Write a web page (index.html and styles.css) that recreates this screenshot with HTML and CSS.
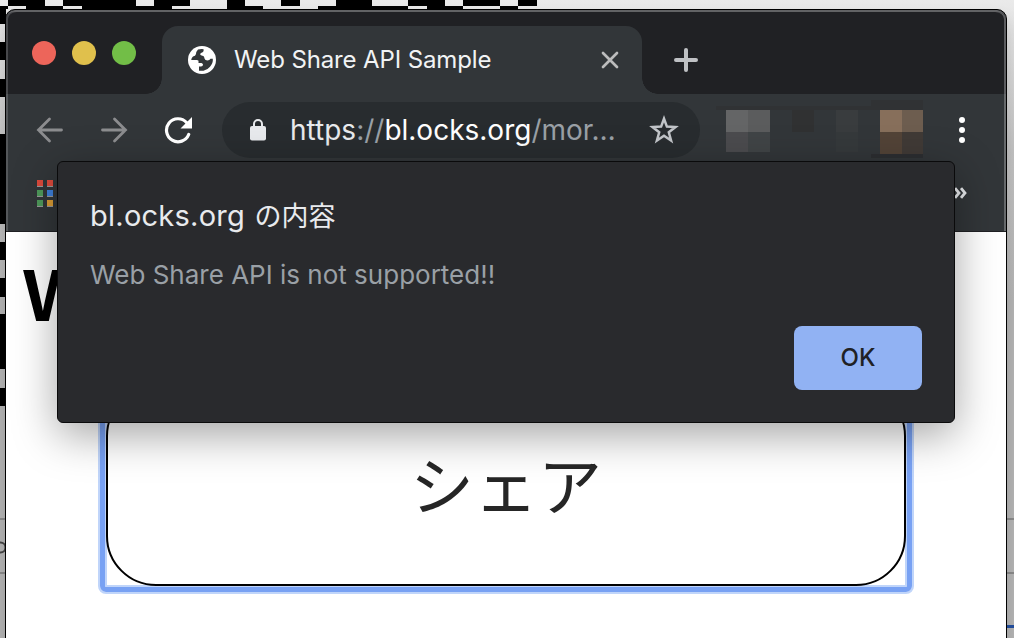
FILE: index.html
```html
<!DOCTYPE html>
<html lang="ja">
<head>
    <meta charset="UTF-8">
    <meta name="viewport" content="width=device-width, initial-scale=1.0">
    <title>Web Share API Sample</title>
    <link rel="stylesheet" href="styles.css">
</head>
<body>
    <!-- Desktop behind the browser -->
    <svg class="backdrop" width="1014" height="638" viewBox="0 0 1014 638">
        <defs>
            <linearGradient id="shade" gradientUnits="userSpaceOnUse" x1="0" y1="0" x2="0" y2="300">
                <stop offset="0" stop-color="#eaeaea"/>
                <stop offset="0.5" stop-color="#c2c2c2"/>
                <stop offset="1" stop-color="#b4b4b4"/>
            </linearGradient>
        </defs>
        <rect width="1014" height="638" fill="url(#shade)"/>
        <path d="M0 0H537V6H518V9H6V406H0Z" fill="#000"/>
        <path d="M0 0h8v6h-8zM45 0h18v6h-18zM136 0h18v6h-18zM190 0h37v6h-37zM245 0h36v6h-36zM300 0h36v6h-36zM372 0h36v6h-36zM445 0h18v6h-18zM500 0h18v6h-18zM8 6h18v3h-18zM63 6h19v3h-19zM172 6h55v3h-55zM263 6h55v3h-55zM408 6h19v3h-19zM463 6h37v3h-37zM0 24h6v18h-6zM0 60h6v19h-6zM0 97h6v37h-6zM0 224h6v18h-6zM0 260h6v18h-6zM0 297h6v17h-6zM0 369h6v19h-6z" fill="url(#shade)"/>
        <path d="M0 518h6v2h-6zM0 572h6v2h-6zM1006 518h8v2h-8zM1006 572h8v2h-8z" fill="#898989"/>
        <circle cx="0.5" cy="547.5" r="5" fill="none" stroke="#444" stroke-width="2"/>
        <rect x="1006" y="625" width="8" height="3" fill="#234f9f"/>
    </svg>

    <div class="window">
        <div class="tabstrip">
            <div class="lights">
                <span class="light red"></span>
                <span class="light yellow"></span>
                <span class="light green"></span>
            </div>
            <div class="tab">
                <svg class="globe" width="28" height="28" viewBox="0 0 28 28">
                    <circle cx="14" cy="14" r="14" fill="#fff"/>
                    <path d="M10 3.600Q13 2.800 15.600 3.200V4.800Q15.500 6.500 13.500 6.800Q12 7.200 12.200 8.500Q12.500 9.500 14.500 9.700Q16.500 10 16.500 12.500Q17 14.500 19.500 14.500Q21.500 14.500 22.500 12.800H24.800Q25.300 17 22 20.800Q19.500 24 15.500 24.800H11V20.500H13Q15 20.300 15 18.500Q15 17.500 13.500 17H10.500V14.800Q10 14 8.500 14H3.200Q3.500 11.500 5 10.500Q7.500 10 8 8Q8.200 5.500 10 3.600Z" fill="#323639"/>
                </svg>
                <span class="tab-title">Web Share API Sample</span>
                <svg class="close" width="18" height="18" viewBox="0 0 18 18">
                    <path d="M2 2L16 16M16 2L2 16" stroke="#bcbcbd" stroke-width="2.7" stroke-linecap="round"/>
                </svg>
            </div>
            <svg class="new-tab" width="24" height="24" viewBox="0 0 24 24">
                <path d="M12 2V22M2 12H22" stroke="#bfc1c4" stroke-width="4" stroke-linecap="round"/>
            </svg>
        </div>

        <div class="toolbar">
            <svg class="arrow" width="28" height="28" viewBox="0 0 28 28">
                <path d="M13.500 3L2.500 14L13.500 25M2.500 14H25.500" fill="none" stroke="#8c8d8f" stroke-width="2.8" stroke-linecap="round"/>
            </svg>
            <svg class="arrow forward" width="28" height="28" viewBox="0 0 28 28">
                <path d="M14.500 3L25.500 14L14.500 25M25.500 14H2.500" fill="none" stroke="#8c8d8f" stroke-width="2.8" stroke-linecap="round"/>
            </svg>
            <svg class="reload" width="28" height="28" viewBox="0 0 28 28">
                <path d="M22.500 6.500A11.500 11.500 0 1 0 24.700 18.500" fill="none" stroke="#fff" stroke-width="3.200" stroke-linecap="round"/>
                <path d="M28 1V12.500H16.500Z" fill="#fff"/>
            </svg>
            <div class="omnibox">
                <svg class="lock" width="16" height="22" viewBox="0 0 16 22">
                    <path d="M4 8V5a4 4 0 0 1 8 0V8" fill="none" stroke="#e8eaed" stroke-width="2"/>
                    <rect y="7" width="16" height="14.500" rx="2" fill="#e8eaed"/>
                </svg>
                <span class="url"><span class="scheme">https</span>://<b>bl.ocks.org</b>/mor…</span>
                <svg class="star" width="30" height="30" viewBox="0 0 30 30">
                    <path d="M15 3.700L17.900 11.600L26.500 12L19.800 17.300L22.100 25.500L15 20.800L7.900 25.500L10.200 17.300L3.500 12L12.100 11.600Z" fill="none" stroke="#c2c5c9" stroke-width="2.500"/>
                </svg>
            </div>
            <svg class="extensions" width="207" height="58" viewBox="0 0 207 58">
                <path d="M0 6H155V0H207V10H0Z" fill="#303234"/>
                <rect x="10" y="10" width="22" height="22" fill="#646566"/>
                <rect x="32" y="10" width="22" height="22" fill="#5b5c5d"/>
                <rect x="10" y="32" width="22" height="20" fill="#4b4b4e"/>
                <rect x="32" y="32" width="22" height="20" fill="#404446"/>
                <rect x="76" y="10" width="22" height="22" fill="#303132"/>
                <rect x="120" y="10" width="22" height="22" fill="#393c3e"/>
                <rect x="120" y="32" width="22" height="20" fill="#35393b"/>
                <rect x="164" y="10" width="22" height="22" fill="#876f5b"/>
                <rect x="186" y="10" width="21" height="22" fill="#6d5d4f"/>
                <rect x="164" y="32" width="22" height="22" fill="#524337"/>
                <rect x="186" y="32" width="21" height="22" fill="#403a36"/>
                <rect x="155" y="54" width="52" height="4" fill="#2c2e31"/>
            </svg>
            <div class="menu"><i></i><i></i><i></i></div>
        </div>

        <div class="bookmarks">
            <svg class="apps" width="16" height="28" viewBox="0 0 16 28">
                <path d="M0 6h6v1h-6zM10 6h6v1h-6zM0 16h6v1h-6zM10 16h6v1h-6zM0 26h6v1h-6zM10 26h6v1h-6z" fill="#9a9a9a"/>
                <path d="M0 0h6v6h-6zM10 0h6v6h-6z" fill="#db4a3c"/>
                <path d="M0 10h6v6h-6zM0 20h6v6h-6z" fill="#4f9a5b"/>
                <path d="M10 10h6v6h-6z" fill="#3e80dc"/>
                <path d="M10 20h6v6h-6z" fill="#dc9d35"/>
            </svg>
            <svg class="more" width="14" height="14" viewBox="0 0 14 14">
                <path d="M2 2.200L6 7L2 11.800M8 2.200L12 7L8 11.800" fill="none" stroke="#e8eaed" stroke-width="2.800"/>
            </svg>
        </div>

        <div class="page">
            <h1>W</h1>
            <button class="share">シェア</button>
        </div>
    </div>

    <div class="dialog">
        <p class="dialog-title">bl.ocks.org <span class="jp">の内容</span></p>
        <p class="dialog-message">Web Share API is not supported!!</p>
        <button class="ok">OK</button>
    </div>
</body>
</html>
```

FILE: styles.css
```css
* {
    box-sizing: border-box;
}

body {
    margin: 0;
    width: 1014px;
    height: 638px;
    overflow: hidden;
    position: relative;
    font-family: Inter, "Noto Sans CJK JP", sans-serif;
}

svg {
    display: block;
    flex-shrink: 0;
}

.backdrop {
    position: absolute;
    top: 0;
    left: 0;
}

/* Browser window */
.window {
    position: relative;
    width: 1002px;
    height: 640px;
    margin: 9px 0 0 5px;
    padding: 0;
    border: 1px solid #000;
    border-radius: 10px 10px 0 0;
    background: #323639;
    overflow: hidden;
    box-shadow: 0 10px 16px rgba(0, 0, 0, 0.15);
}

.tabstrip {
    display: flex;
    height: 84px;
    background: #202124;
    border-top: 2px solid #626365;
    border-radius: 9px 9px 0 0;
    box-shadow: inset 2px 0 #47484b, inset -2px 0 #5b5c5f;
}

.lights {
    display: flex;
    gap: 16px;
    width: 156px;
    padding: 29px 0 0 26px;
}

.light {
    width: 24px;
    height: 24px;
    border-radius: 50%;
}

.red {
    background: #ed655a;
}

.yellow {
    background: #e0c04c;
}

.green {
    background: #72be47;
}

.tab {
    position: relative;
    display: flex;
    align-items: center;
    width: 480px;
    height: 68px;
    margin-top: 14px;
    padding: 0 23px 0 26px;
    background: #323639;
    border-radius: 16px 16px 0 0;
}

/* Rounded feet of the tab */
.tab::before,
.tab::after {
    content: "";
    position: absolute;
    bottom: 0;
    width: 16px;
    height: 16px;
}

.tab::before {
    left: -16px;
    background: radial-gradient(circle at 0 0, transparent 15.5px, #323639 16px);
}

.tab::after {
    right: -16px;
    background: radial-gradient(circle at 100% 0, transparent 15.5px, #323639 16px);
}

.tab-title {
    margin: 0 0 2px 18px;
    font-size: 24px;
    letter-spacing: -0.12px;
    color: #f1f3f4;
    white-space: nowrap;
}

.close {
    margin-left: auto;
}

.new-tab {
    margin: 36px 0 0 32px;
}

.toolbar {
    display: flex;
    align-items: center;
    height: 72px;
    padding-left: 30px;
    box-shadow: inset 2px 0 #54575a, inset -2px 0 #66696b;
}

.forward {
    margin-left: 36px;
}

.reload {
    margin-left: 36px;
}

.omnibox {
    display: flex;
    align-items: center;
    width: 478px;
    height: 56px;
    margin-left: 30px;
    padding: 0 21px 0 28px;
    border-radius: 28px;
    background: #282c2f;
}

.url {
    margin-left: 24px;
    font-size: 28px;
    color: #9aa0a6;
    white-space: nowrap;
}

.scheme {
    color: #e8eaed;
}

.url b {
    font-weight: 400;
    color: #fff;
}

.star {
    margin-left: auto;
}

.extensions {
    margin-left: 16px;
    margin-top: -2px;
}

.menu {
    display: flex;
    flex-direction: column;
    gap: 4px;
    margin-left: 36px;
}

.menu i {
    width: 6px;
    height: 6px;
    border-radius: 50%;
    background: #fff;
}

.bookmarks {
    display: flex;
    justify-content: space-between;
    height: 66px;
    padding: 14px 39px 0 31px;
    border-bottom: 1px solid #202124;
    box-shadow: inset 2px 0 #54575a, inset -2px 0 #66696b;
}

.more {
    margin-top: 6px;
}

.page {
    height: 420px;
    padding: 22px 94px 0;
    background: #fff;
}

h1 {
    margin: 0 0 0 -77px;
    font-family: "Liberation Sans", Arial, sans-serif;
    font-size: 74px;
    line-height: 84px;
    white-space: nowrap;
    color: #000;
}

.share {
    display: block;
    width: 800px;
    height: 200px;
    margin: 48px 0 0 6px;
    padding: 0 0 9px;
    border: 2px solid #000;
    border-radius: 50px;
    background: #fff;
    font-family: "Noto Sans CJK JP", sans-serif;
    font-size: 64px;
    color: #262626;
    position: relative;
}

/* Focus ring */
.share::after {
    content: "";
    position: absolute;
    inset: -8px;
    border: 5px solid #78a1f3;
    border-radius: 6px;
    box-shadow: 0 0 0 2px #c0d5fa, inset 0 0 0 2px #c0d5fa;
    z-index: -1;
}

.page {
    position: relative;
    z-index: 0;
}

/* Alert dialog */
.dialog {
    position: absolute;
    top: 161px;
    left: 57px;
    display: flex;
    flex-direction: column;
    width: 898px;
    height: 262px;
    padding: 31px 32px 32px;
    border: 1px solid #0a0a0b;
    border-radius: 6px;
    background: #292a2d;
    box-shadow: 0 12px 44px rgba(0, 0, 0, 0.36);
}

.dialog p {
    margin: 0;
    white-space: nowrap;
}

.dialog-title {
    font-size: 29px;
    line-height: 44px;
    letter-spacing: 0.25px;
    color: #e8eaed;
}

.jp {
    margin-left: 1px;
    font-family: "Noto Sans CJK JP", sans-serif;
    font-size: 27px;
    letter-spacing: 0;
}

.dialog-message {
    padding-top: 17px;
    font-size: 26px;
    line-height: 40px;
    color: #9aa0a6;
}

.ok {
    align-self: flex-end;
    width: 128px;
    height: 64px;
    margin-top: auto;
    padding: 0 0 1px;
    border: none;
    border-radius: 8px;
    background: #91b2f3;
    font-family: Inter, sans-serif;
    font-size: 24px;
    font-weight: 500;
    color: #202124;
}
```
